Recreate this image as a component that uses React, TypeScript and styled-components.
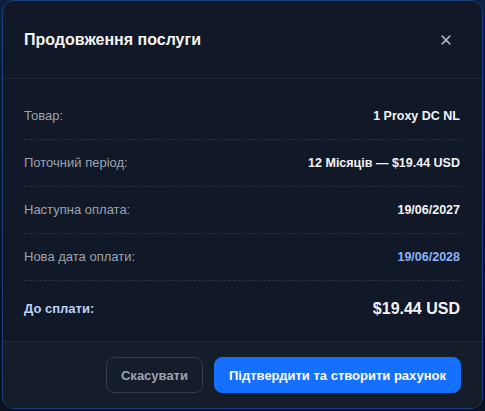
import React from 'react'
import styled, { createGlobalStyle } from 'styled-components'

const GlobalStyle = createGlobalStyle`
  html, body {
    margin: 0;
    padding: 0;
    background: #0b1527;
    font-family: "Liberation Sans", Arial, sans-serif;
  }
  * { box-sizing: border-box; }
`

const Backdrop = styled.div`
  width: 485px;
  height: 411px;
  padding: 0 2px 2px 2px;
  background: linear-gradient(180deg, #0c2142 0%, #0b1527 60%, #0a1322 100%);
`

const Modal = styled.div`
  height: 409px;
  display: flex;
  flex-direction: column;
  background: #111827;
  border: 1px solid #1c3f78;
  border-radius: 12px;
  overflow: hidden;
`

const Header = styled.div`
  height: 78px;
  flex-shrink: 0;
  display: flex;
  align-items: center;
  justify-content: space-between;
  padding: 0 30px 0 21px;
  border-bottom: 1px solid #1f2937;
`

const Title = styled.h2`
  margin: 0;
  font-size: 16px;
  font-weight: 700;
  color: #f3f4f6;
`

const Close = styled.button`
  border: none;
  background: none;
  padding: 0;
  width: 12px;
  height: 12px;
  display: flex;
  align-items: center;
  justify-content: center;
  cursor: pointer;
`

const Body = styled.div`
  flex: 1;
  padding: 14px 22px 0 21px;
`

const Row = styled.div<{ $total?: boolean }>`
  display: flex;
  justify-content: space-between;
  align-items: center;
  padding: ${({ $total }) => ($total ? '18px 0 0' : '14px 0')};
  line-height: ${({ $total }) => ($total ? '20px' : '18px')};
  border-bottom: ${({ $total }) => ($total ? 'none' : '1px dashed #263143')};
`

const Label = styled.span<{ $total?: boolean }>`
  font-size: 13px;
  color: ${({ $total }) => ($total ? '#bcd2f7' : '#9ca3af')};
  font-weight: ${({ $total }) => ($total ? 700 : 400)};
`

const Value = styled.span<{ $accent?: boolean; $total?: boolean }>`
  font-size: ${({ $total }) => ($total ? '16px' : '12.5px')};
  font-weight: 700;
  color: ${({ $accent }) => ($accent ? '#8ab4f8' : '#f3f4f6')};
`

const Footer = styled.div`
  height: 67px;
  flex-shrink: 0;
  display: flex;
  justify-content: flex-end;
  align-items: center;
  gap: 11px;
  padding: 0 21px;
  background: #151c2a;
  border-top: 1px solid #222c3c;
`

const Button = styled.button<{ $primary?: boolean }>`
  height: 36px;
  padding: 0 ${({ $primary }) => ($primary ? '14px' : '14px')};
  border-radius: 8px;
  font-family: "Liberation Sans", Arial, sans-serif;
  font-size: 13px;
  font-weight: 700;
  cursor: pointer;
  border: 1px solid ${({ $primary }) => ($primary ? '#1570ff' : '#323b4b')};
  background: ${({ $primary }) => ($primary ? '#1570ff' : 'transparent')};
  color: ${({ $primary }) => ($primary ? '#ffffff' : '#9ca3af')};
`

const rows = [
  { label: 'Товар:', value: '1 Proxy DC NL' },
  { label: 'Поточний період:', value: '12 Місяців — $19.44 USD' },
  { label: 'Наступна оплата:', value: '19/06/2027' },
  { label: 'Нова дата оплати:', value: '19/06/2028', accent: true },
]

export default function App() {
  return (
    <>
      <GlobalStyle />
      <Backdrop>
        <Modal>
          <Header>
            <Title>Продовження послуги</Title>
            <Close aria-label="close">
              <svg width="10" height="10" viewBox="0 0 10 10">
                <path d="M1.2 1.2 L8.8 8.8 M8.8 1.2 L1.2 8.8" stroke="#a3acb9" strokeWidth="1.8" strokeLinecap="round" />
              </svg>
            </Close>
          </Header>
          <Body>
            {rows.map((r) => (
              <Row key={r.label}>
                <Label>{r.label}</Label>
                <Value $accent={r.accent}>{r.value}</Value>
              </Row>
            ))}
            <Row $total>
              <Label $total>До сплати:</Label>
              <Value $total>$19.44 USD</Value>
            </Row>
          </Body>
          <Footer>
            <Button>Скасувати</Button>
            <Button $primary>Підтвердити та створити рахунок</Button>
          </Footer>
        </Modal>
      </Backdrop>
    </>
  )
}
